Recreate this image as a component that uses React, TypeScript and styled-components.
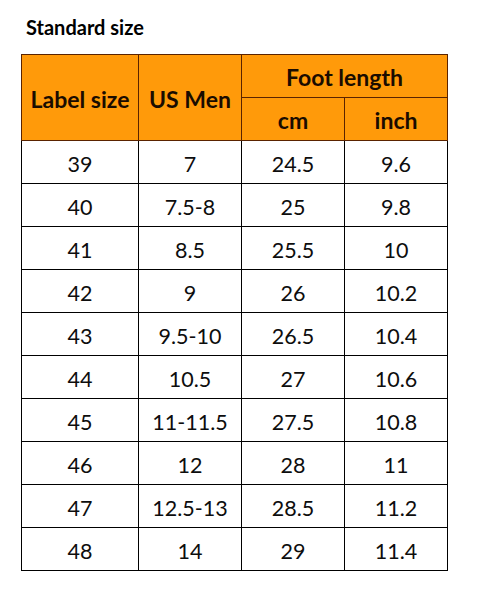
import styled, { createGlobalStyle } from "styled-components";

const GlobalStyle = createGlobalStyle`
  html, body {
    margin: 0;
    padding: 0;
    background: #ffffff;
  }
  body {
    font-family: Lato, "Open Sans", "Liberation Sans", sans-serif;
    color: #000;
  }
`

const Page = styled.div`
  width: 478px;
  height: 602px;
  padding: 14px 0 0 21px;
  box-sizing: border-box;
`

const Title = styled.h1`
  margin: 0 0 0 5px;
  font-size: 20px;
  line-height: 26px;
  font-weight: 700;
  height: 40px;
`

const Table = styled.table`
  border-collapse: collapse;
  table-layout: fixed;
  width: 427px;
`

const HeadCell = styled.th<{ $w?: number }>`
  ${p => p.$w ? `width: ${p.$w}px;` : ''}
  height: 43px;
  padding: 2px 0 0;
  box-sizing: border-box;
  background: #ff9a0a;
  border: 1px solid #5a2300;
  color: #1a0c00;
  font-size: 23px;
  font-weight: 700;
  text-align: center;
  vertical-align: middle;
`

const BodyCell = styled.td`
  height: 43px;
  padding: 3px 0 0;
  box-sizing: border-box;
  border: 1px solid #000;
  font-size: 21.5px;
  font-weight: 400;
  color: #0d0d0d;
  text-align: center;
  vertical-align: middle;
`

const Row = styled.tr``

type SizeRow = [string, string, string, string]

const rows: SizeRow[] = [
  ['39', '7', '24.5', '9.6'],
  ['40', '7.5-8', '25', '9.8'],
  ['41', '8.5', '25.5', '10'],
  ['42', '9', '26', '10.2'],
  ['43', '9.5-10', '26.5', '10.4'],
  ['44', '10.5', '27', '10.6'],
  ['45', '11-11.5', '27.5', '10.8'],
  ['46', '12', '28', '11'],
  ['47', '12.5-13', '28.5', '11.2'],
  ['48', '14', '29', '11.4'],
]

export default function App() {
  return (
    <Page>
      <GlobalStyle />
      <Title>Standard size</Title>
      <Table>
        <thead>
          <Row>
            <HeadCell $w={117} rowSpan={2}>Label size</HeadCell>
            <HeadCell $w={103} rowSpan={2}>US Men</HeadCell>
            <HeadCell colSpan={2}>Foot length</HeadCell>
          </Row>
          <Row>
            <HeadCell $w={103}>cm</HeadCell>
            <HeadCell $w={103}>inch</HeadCell>
          </Row>
        </thead>
        <tbody>
          {rows.map((r, i) => (
            <Row key={i}>
              {r.map((v, j) => <BodyCell key={j}>{v}</BodyCell>)}
            </Row>
          ))}
        </tbody>
      </Table>
    </Page>
  )
}
